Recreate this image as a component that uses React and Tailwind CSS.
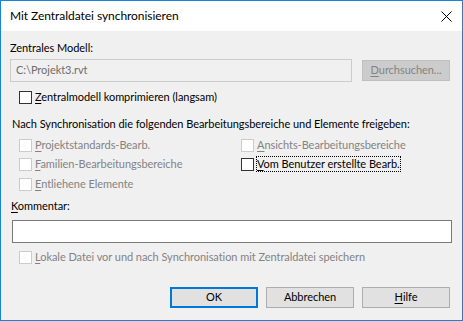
import React from 'react';

const font = { fontFamily: 'Lato, "Noto Sans", sans-serif' };

const Acc = ({ k, rest }) => (
  <>
    <span className="underline underline-offset-2">{k}</span>
    {rest}
  </>
);

const Check = ({ label, disabled, focused }) => (
  <div className="flex h-[16px] items-center">
    <span
      className={`h-[13px] w-[13px] shrink-0 border bg-white ${
        disabled ? 'border-[#cccccc]' : 'border-[#333333]'
      }`}
    />
    <span
      className={`ml-[3px] whitespace-nowrap leading-[14px] ${
        disabled ? 'text-[#838383]' : 'text-black'
      } ${focused ? 'outline outline-1 outline-dotted outline-black' : ''}`}
    >
      {label}
    </span>
  </div>
);

const Button = ({ children, primary, disabled }) => (
  <button
    type="button"
    className={`flex h-[21px] w-[88px] items-center justify-center ${
      primary
        ? 'border-2 border-[#0078d7] bg-[#e1e1e1] text-black'
        : disabled
        ? 'border border-[#bfbfbf] bg-[#cccccc] text-[#838383]'
        : 'border border-[#adadad] bg-[#e1e1e1] text-black'
    }`}
  >
    {children}
  </button>
);

export default function App() {
  return (
    <div
      className="h-[321px] w-[463px] border border-[#1883d7] bg-[#f0f0f0] text-[11px] tracking-[-0.05px] text-black"
      style={font}
    >
      {/* title bar */}
      <div className="flex h-[30px] items-center justify-between bg-white pl-[9px] pr-[10px]">
        <span className="text-[12px] leading-[16px]">Mit Zentraldatei synchronisieren</span>
        <svg width="11" height="11" viewBox="0 0 11 11">
          <path d="M0.5 0.5 L10.5 10.5 M10.5 0.5 L0.5 10.5" stroke="#000" strokeWidth="1" />
        </svg>
      </div>

      <div className="flex flex-col pl-[9px] pr-[10px]">
        <div className="mt-[9px] h-[16px] leading-[16px]">Zentrales Modell:</div>

        <div className="mt-[3px] flex items-start">
          <div className="flex h-[23px] w-[342px] items-center border border-[#cccccc] bg-[#f0f0f0] pl-[5px] text-[#6d6d6d]">
            C:\Projekt3.rvt
          </div>
          <div className="ml-[10px] mt-[1px]">
            <Button disabled>
              <Acc k="D" rest="urchsuchen..." />
            </Button>
          </div>
        </div>

        <div className="mt-[7px] pl-[9px]">
          <Check label={<Acc k="Z" rest="entralmodell komprimieren (langsam)" />} />
        </div>

        <div className="mt-[11px] h-[16px] whitespace-nowrap pl-[2px] leading-[16px]">
          Nach Synchronisation die folgenden Bearbeitungsbereiche und Elemente freigeben:
        </div>

        <div className="mt-[5px] grid grid-cols-[222px_1fr] pl-[9px]">
          <Check disabled label={<Acc k="P" rest="rojektstandards-Bearb." />} />
          <Check disabled label={<Acc k="A" rest="nsichts-Bearbeitungsbereiche" />} />
        </div>
        <div className="mt-[3px] grid grid-cols-[222px_1fr] pl-[9px]">
          <Check disabled label={<Acc k="F" rest="amilien-Bearbeitungsbereiche" />} />
          <Check focused label={<Acc k="V" rest="om Benutzer erstellte Bearb." />} />
        </div>
        <div className="mt-[4px] pl-[9px]">
          <Check disabled label={<Acc k="E" rest="ntliehene Elemente" />} />
        </div>

        <div className="mt-[6px] h-[16px] pl-[1px] leading-[16px]">
          <Acc k="K" rest="ommentar:" />
        </div>

        <div className="ml-[2px] mt-[6px] h-[23px] w-[440px] border border-[#7a7a7a] bg-white" />

        <div className="mt-[6px] pl-[9px]">
          <Check disabled label={<Acc k="L" rest="okale Datei vor und nach Synchronisation mit Zentraldatei speichern" />} />
        </div>

        <div className="mt-[22px] flex justify-end gap-[8px] pr-[2px]">
          <Button primary>OK</Button>
          <Button>Abbrechen</Button>
          <Button>
            <Acc k="H" rest="ilfe" />
          </Button>
        </div>
      </div>
    </div>
  );
}
